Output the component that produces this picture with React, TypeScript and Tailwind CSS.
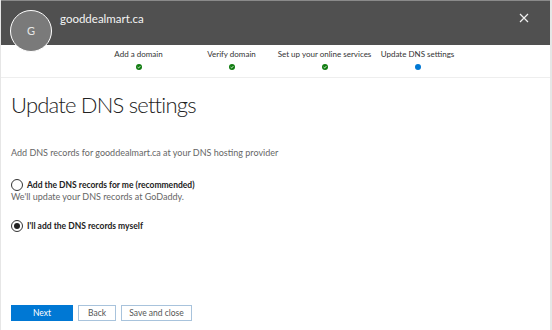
import React from "react";

const steps = [
  { label: "Add a domain", done: true },
  { label: "Verify domain", done: true },
  { label: "Set up your online services", done: true },
  { label: "Update DNS settings", done: false },
];

function StepDot({ done }: { done: boolean }) {
  if (!done) return <div className="w-[6px] h-[6px] rounded-full bg-[#0078d4]" />;
  return (
    <svg width="6" height="6" viewBox="0 0 6 6">
      <circle cx="3" cy="3" r="3" fill="#107c10" />
      <path d="M1.6 3.1 L2.6 4 L4.4 2.1" stroke="#fff" strokeWidth="0.8" fill="none" />
    </svg>
  );
}

function Radio({ checked }: { checked: boolean }) {
  return (
    <div className="w-[12px] h-[12px] rounded-full border border-[#333] bg-white flex items-center justify-center shrink-0">
      {checked && <div className="w-[6px] h-[6px] rounded-full bg-[#222]" />}
    </div>
  );
}

export default function App() {
  return (
    <div
      className="w-[552px] h-[330px] bg-white flex flex-col border-l border-r-2 border-[#e6e6e6] overflow-hidden"
      style={{ fontFamily: 'Lato, "Open Sans", sans-serif' }}
    >
      {/* Header */}
      <div className="h-[1px] bg-[#8a8a8a]" />
      <div className="h-[44px] bg-[#505050] relative flex items-start">
        <div className="absolute left-[9px] top-[9px] w-[42px] h-[42px] rounded-full border border-white bg-[#7a7a7a] flex items-center justify-center text-[#e8e8e8] text-[11px]">
          G
        </div>
        <div className="ml-[59px] mt-[11px] text-[#f4f4f4] text-[11.5px] leading-[14px]">gooddealmart.ca</div>
        <div className="ml-auto mr-[21px] mt-[12px]">
          <svg width="10" height="10" viewBox="0 0 10 10">
            <path d="M1 1 L9 9 M9 1 L1 9" stroke="#f0f0f0" strokeWidth="1.2" />
          </svg>
        </div>
      </div>

      {/* Steps */}
      <div className="h-[33px] flex border-b border-[#eeeeee] pl-[91px] pt-[4px]">
        {steps.map((s) => (
          <div key={s.label} className="w-[93px] flex flex-col items-center gap-[4px]">
            <span className="text-[8px] text-[#333] whitespace-nowrap leading-[11px]">{s.label}</span>
            <StepDot done={s.done} />
          </div>
        ))}
      </div>

      {/* Body */}
      <div className="flex-1 flex flex-col px-[10px]">
        <h1 className="mt-[12px] text-[22px] font-light text-[#222] leading-[29px] tracking-[-0.8px]">
          Update DNS settings
        </h1>
        <p className="mt-[28px] text-[9px] text-[#666] leading-[12px]">
          Add DNS records for gooddealmart.ca at your DNS hosting provider
        </p>

        <div className="mt-[20px] flex items-center gap-[4px]">
          <Radio checked={false} />
          <span className="text-[8.5px] font-bold text-[#222] leading-[12px]">Add the DNS records for me (recommended)</span>
        </div>
        <p className="text-[9px] text-[#666] leading-[11px]">
          We'll update your DNS records at GoDaddy.
        </p>

        <div className="mt-[18px] flex items-center gap-[4px]">
          <Radio checked={true} />
          <span className="text-[8.5px] font-bold text-[#222] leading-[12px]">I'll add the DNS records myself</span>
        </div>

        <div className="mt-auto mb-[9px] flex gap-[5px]">
          <button className="w-[62px] h-[16px] bg-[#0078d4] text-white text-[8.5px] leading-[16px]">Next</button>
          <button className="w-[38px] h-[16px] border border-[#a8c3dc] text-[#555] text-[8.5px] leading-[14px]">Back</button>
          <button className="w-[71px] h-[16px] border border-[#a8c3dc] text-[#555] text-[8.5px] leading-[14px]">Save and close</button>
        </div>
      </div>
    </div>
  );
}
